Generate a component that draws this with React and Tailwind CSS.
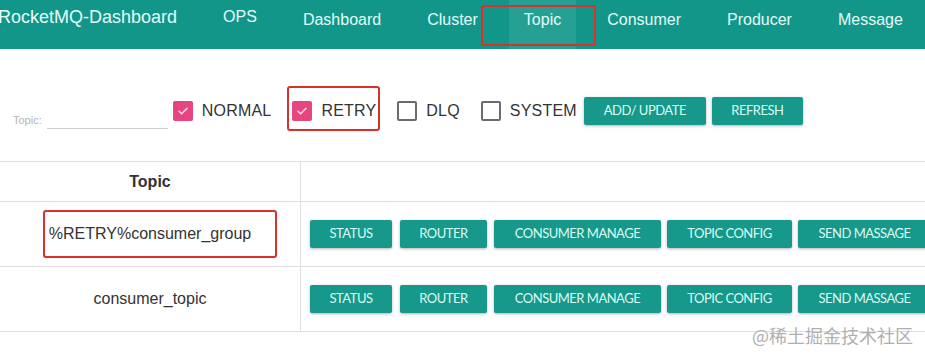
import React from "react";

const navItems = ["Dashboard", "Cluster", "Topic", "Consumer", "Producer", "Message"];

const Check = ({ checked, label, boxed }) => (
  <label className="relative flex items-center h-[20px] mr-[21px] last:mr-0">
    {checked ? (
      <span className="flex items-center justify-center w-[20px] h-[20px] rounded-[2px] bg-[#e6457f]">
        <svg width="14" height="14" viewBox="0 0 14 14" fill="none">
          <path d="M3 7.2l2.6 2.6L11 4.4" stroke="#fbd7e4" strokeWidth="1.6" strokeLinecap="round" strokeLinejoin="round" />
        </svg>
      </span>
    ) : (
      <span className="w-[20px] h-[20px] rounded-[2px] border-2 border-[#6b6b6b] bg-white" />
    )}
    <span className="ml-[9px] text-[16px] leading-[20px] text-[#333] tracking-[0.2px]">{label}</span>
    {boxed && (
      <span className="absolute -left-[5px] -right-[4px] -top-[15px] -bottom-[10px] border-2 border-[#d9302a] rounded-[3px]" />
    )}
  </label>
);

const Btn = ({ children, className = "" }) => (
  <button
    className={`h-[28px] shrink-0 rounded-[2px] bg-[#16988a] text-[#dcfbf2] text-[13px] tracking-[-0.5px] font-['Lato',sans-serif] shadow-[0_1px_3px_rgba(0,0,0,0.3)] ${className}`}
  >
    {children}
  </button>
);

const Actions = () => (
  <div className="flex items-center pl-[9px] whitespace-nowrap">
    <Btn className="w-[82px]">STATUS</Btn>
    <Btn className="w-[87px] ml-[8px]">ROUTER</Btn>
    <Btn className="w-[167px] ml-[7px]">CONSUMER MANAGE</Btn>
    <Btn className="w-[125px] ml-[6px]">TOPIC CONFIG</Btn>
    <Btn className="w-[133px] ml-[6px]">SEND MASSAGE</Btn>
  </div>
);

export default function App() {
  return (
    <div className="relative w-[925px] h-[360px] overflow-hidden bg-white font-['Liberation_Sans',Arial,sans-serif]">
      {/* Top navbar */}
      <nav className="flex h-[49px] bg-[#12968a] text-[#e3fdf6]">
        <div className="-ml-[2px] pt-[6px] text-[18px] leading-[22px]">RocketMQ-Dashboard</div>
        <div className="ml-[31px] flex">
          <div className="px-[15px] pt-[6px] text-[16px] leading-[22px]">OPS</div>
          {navItems.map((item) => (
            <div
              key={item}
              className={`relative ml-[16px] px-[15px] pt-[9px] text-[16px] leading-[22px] ${
                item === "Topic" ? "bg-[#25a093]" : ""
              }`}
            >
              {item}
              {item === "Topic" && (
                <span className="absolute -left-[28px] -right-[20px] top-[5px] bottom-[3px] border-2 border-[#d9302a] rounded-[3px]" />
              )}
            </div>
          ))}
        </div>
      </nav>

      {/* Filters */}
      <div className="flex items-start h-[112px] pt-[48px] pl-[13px]">
        <div className="flex items-end h-[20px] mt-[12px]">
          <span className="mb-[2px] text-[11px] leading-[14px] text-[#b5b5b5]">Topic:</span>
          <span className="ml-[5px] w-[121px] h-[20px] border-b border-[#cfcfcf]" />
        </div>
        <div className="flex items-center ml-[5px] mt-[4px]">
          <Check checked label="NORMAL" />
          <Check checked boxed label="RETRY" />
          <Check label="DLQ" />
          <Check label="SYSTEM" />
        </div>
        <Btn className="w-[122px] ml-[7px]">ADD/ UPDATE</Btn>
        <Btn className="w-[91px] ml-[6px]">REFRESH</Btn>
      </div>

      {/* Table */}
      <div className="border-t border-[#dedede] text-[16px] text-[#333]">
        <div className="flex h-[40px] border-b border-[#dedede]">
          <div className="w-[301px] border-r border-[#dedede] flex items-center justify-center font-bold">Topic</div>
          <div className="flex-1" />
        </div>
        <div className="flex h-[65px] border-b border-[#dedede]">
          <div className="w-[301px] shrink-0 border-r border-[#dedede] flex items-center justify-center">
            <span className="relative leading-[20px]">
              %RETRY%consumer_group
              <span className="absolute -left-[6px] -right-[26px] -top-[14px] -bottom-[14px] border-2 border-[#d9302a] rounded-[3px]" />
            </span>
          </div>
          <Actions />
        </div>
        <div className="flex h-[65px] border-b border-[#dedede]">
          <div className="w-[301px] shrink-0 border-r border-[#dedede] flex items-center justify-center">
            consumer_topic
          </div>
          <Actions />
        </div>
      </div>

      <div className="absolute left-[752px] top-[324px] text-[18px] leading-[22px] text-[#b0b0b0] font-['Noto_Sans_CJK_SC',sans-serif]">
        @稀土掘金技术社区
      </div>
    </div>
  );
}
